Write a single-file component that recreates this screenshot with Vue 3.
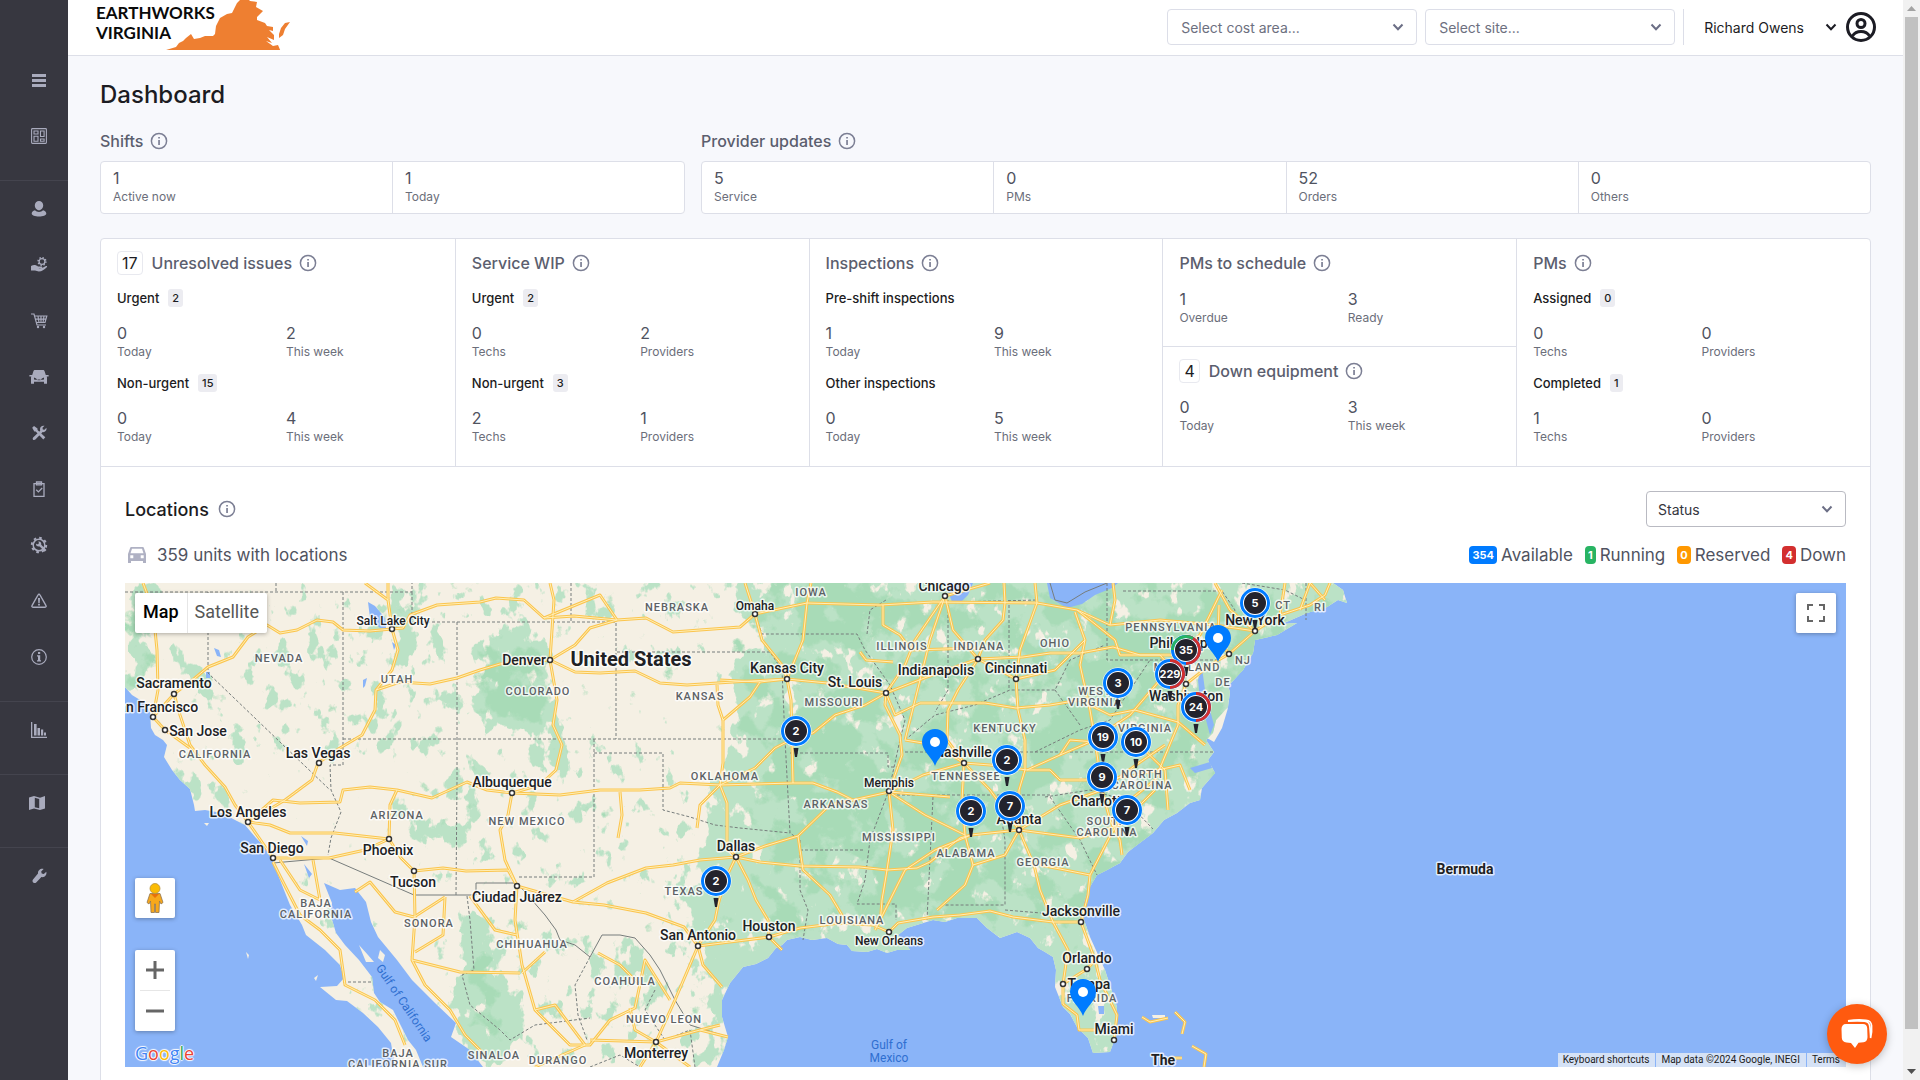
<script setup>
const navGroups = [
  ['menu', 'board'],
  ['user', 'service', 'cart', 'car', 'tools', 'clipboard', 'gear', 'warning', 'info'],
  ['chart'],
  ['map'],
  ['wrench'],
]
const navNames = {
  menu: 'Menu', board: 'Dashboard', user: 'People', service: 'Service', cart: 'Orders', car: 'Equipment',
  tools: 'Repairs', clipboard: 'Inspections', gear: 'Maintenance', warning: 'Issues', info: 'Information',
  chart: 'Reports', map: 'Map', wrench: 'Settings',
}

const summaries = [
  { title: 'Shifts', size: 'narrow', cells: [['1', 'Active now'], ['1', 'Today']] },
  { title: 'Provider updates', size: 'wide', cells: [['5', 'Service'], ['0', 'PMs'], ['52', 'Orders'], ['0', 'Others']] },
]

const columns = [
  [{ title: 'Unresolved issues', total: '17', groups: [
    { name: 'Urgent', count: '2', stats: [['0', 'Today'], ['2', 'This week']] },
    { name: 'Non-urgent', count: '15', stats: [['0', 'Today'], ['4', 'This week']] },
  ] }],
  [{ title: 'Service WIP', groups: [
    { name: 'Urgent', count: '2', stats: [['0', 'Techs'], ['2', 'Providers']] },
    { name: 'Non-urgent', count: '3', stats: [['2', 'Techs'], ['1', 'Providers']] },
  ] }],
  [{ title: 'Inspections', groups: [
    { name: 'Pre-shift inspections', stats: [['1', 'Today'], ['9', 'This week']] },
    { name: 'Other inspections', stats: [['0', 'Today'], ['5', 'This week']] },
  ] }],
  [
    { title: 'PMs to schedule', groups: [{ stats: [['1', 'Overdue'], ['3', 'Ready']] }] },
    { title: 'Down equipment', total: '4', groups: [{ stats: [['0', 'Today'], ['3', 'This week']] }] },
  ],
  [{ title: 'PMs', groups: [
    { name: 'Assigned', count: '0', stats: [['0', 'Techs'], ['0', 'Providers']] },
    { name: 'Completed', count: '1', stats: [['1', 'Techs'], ['0', 'Providers']] },
  ] }],
]

const legend = [
  ['354', 'Available', 'blue'], ['1', 'Running', 'green'], ['0', 'Reserved', 'amber'], ['4', 'Down', 'red'],
]

const land = 'M125 583V687L132 695 145 703 150 712 151 728 155 735 163 740 167 745 164 757 172 770 180 780 190 789 194 805 195 811 205 810 222 813 235 820 245 825 256 838 268 850 273 862 282 885 290 905 302 925 306 935 325 950 340 965 344 978 337 986 320 987 336 1000 347 1001 363 1013 378 1027 391 1043 395 1067H423L416 1050 408 1040 399 1022 393 1010 380 1002 374 993 372 977 359 960 345 945 336 933 330 913 332 903 324 883 340 890 355 888 366 902 371 922 378 937 397 960 412 980 435 1003 456 1023 451 1037 470 1050 483 1067H717L724 1050 728 1037 722 1017 722 1000 730 983 743 967 756 964 768 958 776 948 782 945 787 940 800 937 812 940 827 938 838 944 847 945 852 951 867 952 877 949 887 953 897 950 910 950 905 942 898 935 907 928 920 924 933 920 945 922 957 918 977 918 987 928 1000 938 1017 932 1030 938 1038 948 1045 952 1053 957 1056 970 1055 987 1063 1007 1070 1014 1077 1027 1088 1038 1093 1053 1110 1052 1117 1033 1117 1007 1105 970 1090 937 1083 917 1084 902 1088 890 1097 875 1107 870 1120 863 1128 852 1137 845 1153 833 1164 820 1177 813 1190 803 1200 800 1202 788 1215 773 1208 760 1214 752 1206 740 1213 733 1216 720 1228 707 1230 692 1226 680 1217 670 1230 684 1243 670 1253 653 1255 640 1277 635 1297 623 1282 624 1307 613 1327 607 1338 600 1347 603 1343 590 1333 583Z'

const forests = [
  { o: 0.9, d: 'M700 570L735 605 760 640 728 665 735 720 725 760 705 800 700 860 690 930 712 965 728 1040 735 1067H1400V570Z' },
  { o: 0.5, d: 'M670 650L740 640 740 800 700 860 672 880 665 940 690 1010 690 1067 740 1060 740 640Z' },
  { o: 0.9, d: 'M125 583H160L165 640 205 665 220 720 250 760 240 770 200 700 175 660 150 600 145 690H125Z' },
  { o: 0.55, d: 'M160 740L180 755 225 790 260 830 300 860 290 870 240 825 195 812 170 770Z' },
  { o: 0.85, d: 'M520 615L550 640 550 690 570 720 560 770 530 775 530 730 490 730 455 720 470 700 480 680 470 640Z' },
  { o: 0.8, d: 'M395 583H418L412 630 440 640 400 660 385 725 370 728 390 690 395 650Z' },
  { o: 0.7, d: 'M395 790L420 812 450 825 470 840 468 860 440 835 410 825 385 805Z' },
  { o: 0.95, d: 'M463 905L490 930 495 970 530 1010 500 1067H480L455 1020 450 990 462 965Z' },
  { o: 0.6, d: 'M600 960L640 950 660 985 650 1010 620 1000Z' },
  { o: 0.6, d: 'M455 770H480V830L460 820Z' },
  { o: 0.38, d: 'M230 590H460V760H240Z' },
  { o: 0.33, d: 'M455 583H700V670H560V620H455Z' },
  { o: 0.3, d: 'M450 740H690V900H640L540 890 410 880 400 800Z' },
  { o: 0.38, d: 'M276 870L330 940 360 1000 410 1067 440 1067 380 980 320 880Z' },
  { o: 0.34, d: 'M420 900L640 940 720 1067H420L460 1020 400 950Z' },
]
const highlands = [
  { o: 0.55, d: 'M740 583H1340V800L1130 870 1080 920 760 940 735 700Z' },
  { o: 0.85, d: 'M1110 620L1180 600 1160 680 1100 730 1040 790 1000 800 1040 740 1080 700Z' },
  { o: 0.8, d: 'M780 700H880L870 800 790 850Z' },
  { o: 0.75, d: 'M800 583H890V640H800Z' },
  { o: 0.65, d: 'M870 790H1000V910H870Z' },
  { o: 0.7, d: 'M125 590H150V690H125ZM470 640H550V730H480ZM465 920L500 960 505 1060 480 1040ZM205 660L245 750 230 750Z' },
]

const roads = [
  'M143 583L153 610 157 650 158 690 153 717 165 730 190 748', 'M174 694L180 715 190 745 205 765 225 787 235 805 248 822 273 858',
  'M153 717L174 694 195 678 208 667 233 657 248 637 267 625 280 633 297 630 317 620 333 622 343 630 370 631 403 628 410 615 437 605 480 602 496 598 524 600 544 618 574 616 617 620 646 618 673 632 740 627 755 614 807 603 880 605 933 602 1037 603 1077 610 1110 625 1160 620 1215 625 1255 631',
  'M365 583L388 600 392 629 398 650 392 670 376 690 375 710 362 735 340 748 318 763 312 780 285 800 260 815',
  'M388 583V600', 'M544 618L600 595 617 620M550 660L575 645 590 628 617 620',
  'M376 690L400 682 430 684 457 678 480 670 500 664 550 660 575 672 600 673 635 671 660 683 687 685 733 682 787 679 827 683 886 693 927 677 978 659 1023 657 1050 653 1080 653 1113 647 1140 655 1175 655',
  'M550 583L554 600 550 660 557 700 553 725 562 745 556 770 540 785 512 793 508 815 500 830 505 860 517 886',
  'M248 822L273 800 300 803 340 802 343 790 370 787 397 790 432 798 467 782 487 790 512 793 560 795 600 790 640 790 670 788 680 783 720 785 793 783 813 783 837 792 853 800 889 792 923 775 964 763 990 765 1027 770 1060 755 1090 742 1130 715 1160 680 1175 655 1200 635 1222 590',
  'M397 790L390 805 389 839', 'M248 822L270 825 290 833 335 833 389 839 401 858 414 871 443 868 466 871 508 870 517 886 573 902 604 905 646 913 684 927 698 946 769 937 800 928 840 923 873 925 889 932 898 923 933 917 960 915 990 911 1013 917 1053 922 1081 922',
  'M273 858L329 858 365 850 389 839', 'M573 902L607 883 646 868 673 865 700 860 736 857 760 862 800 866 860 867 887 870 917 868 930 862 960 838 971 835 1019 830 1080 838 1120 825 1155 790',
  'M811 583L807 603 803 640 787 679 760 682 750 697 723 720 723 763 720 785 727 803 727 847 736 857 725 880 718 905 715 920 698 946 675 1000 656 1042',
  'M717 685L718 705 723 720M760 682L720 680M720 785L700 805 697 828', 'M736 857L748 880 756 900 768 920 769 937 782 950',
  'M745 583L755 614 762 640 782 665 787 679 791 700 793 783', 'M720 785L755 768 775 748 800 735 813 733 835 715 865 705 886 693',
  'M736 857L765 846 798 836 830 805 853 800', 'M798 836L803 870 830 895 845 920', 'M698 946L703 965 722 987',
  'M945 596L915 640 905 665 886 693 885 705 900 735 902 755 889 792 893 830 887 870 882 900 880 925', 'M886 693L895 715 920 703',
  'M945 596L930 640 915 700 905 740', 'M945 596L953 630 978 659 958 690 948 710 947 740 964 763 962 800 965 835 973 865 965 885 937 910',
  'M945 596L990 583M883 605L883 625 900 635 911 650 978 648', 'M860 652L866 660 893 662M978 659L1016 679 1055 670 1085 640',
  'M1035 583L1037 603 1020 650 1016 679 1018 710 1025 740 1025 770 1019 790 1019 830 1034 865 1040 890 1053 922 1068 950 1063 984 1063 1004 1077 1015 1079 1030 1095 1030',
  'M1004 583L1005 603 1003 620 985 640 978 659', 'M1114 1040L1117 1015 1100 980 1095 960 1081 922 1088 895 1090 875 1108 840 1130 800 1155 780 1178 725 1178 705 1186 684 1210 665 1229 654 1255 631 1280 615 1310 605 1325 595 1330 583',
  'M1019 830L1060 805 1102 790 1136 765 1165 745', 'M1075 612L1085 640 1080 665 1090 710 1095 740 1102 790 1110 820 1120 840 1122 855',
  'M905 740L935 745 964 763 990 790 1019 830 1005 855 973 865', 'M920 703L985 703 1016 708 1050 705 1080 700 1110 715 1135 710 1178 722 1205 745',
  'M889 792L925 815 965 835M889 792L950 797', 'M875 930L905 870 935 850 971 835', 'M1063 984L1087 969 1100 955', 'M1040 865L1090 875',
  'M1027 770L1050 770 1060 780 1102 780 1136 775 1180 765 1190 790', 'M1136 742L1165 770 1168 810', 'M1060 755L1070 740 1095 742',
  'M1077 610L1090 620 1115 640 1120 655 1160 655 1186 684', 'M1110 625L1115 600 1113 583M1255 631L1230 610 1215 583M1280 615L1285 583M1300 610L1310 583M1229 654L1218 640 1219 605M1310 583L1325 600',
  'M273 862L282 880 300 915 320 930 340 950 345 985 375 1000 395 1020 405 1045', 'M280 860L300 890 320 900 313 860',
  'M355 892L370 882 395 912 414 917 445 897', 'M414 871L415 917 412 960 425 985 450 1010 465 1035 485 1055', 'M412 960L460 972 520 973M445 897L443 935 415 952',
  'M470 896L495 930 517 935', 'M517 886L515 920 522 965 535 1010 570 1045 590 1045 610 1020 635 1008 645 960 670 1000', 'M522 973L545 952M535 1010L555 1005 585 1045 535 1067',
  'M598 953L620 965 640 985M656 1042L635 1030 630 1008M656 1042L700 1030 728 1037M656 1042L590 1040M656 1042L640 1067M656 1042L690 1067M700 1030L720 1025M620 792L622 815 618 838',
  'M1142 1017L1150 1022 1168 1018M1175 1012L1185 1022 1182 1034M1192 1046L1206 1054 1204 1067M1172 1058L1182 1058',
]

const borders = 'M125 592H412V583M276 583V592M343 592V765H330L331 790 341 812 331 838 328 855M412 592V622H616V739M457 622V780L456 895M343 739H785M571 583V622M208 592V673L330 790M594 739V877H517M594 753H663V810L690 817 715 825 740 828 790 833M617 652H770L782 670 785 739 790 833 800 840V890L808 910 803 940M800 850H865M900 740L889 790 870 840 865 880 857 904H896V920M790 753H888V767H900M887 795H1050M905 752H1213M933 797L927 920M998 797L1005 840V905H945M1005 910L1053 914M755 614L762 634H857L865 650 890 685 905 720 900 740M867 634L870 610 886 600M948 600V690L935 712M953 602L1037 600M1009 600V690M905 740L935 715 975 705 1010 690 1055 690 1070 660 1105 645M1107 583V660H1218M1123 591H1222L1235 610 1220 650M1045 797L1090 790 1125 800 1153 829M1050 797L1080 840 1097 875M1035 752L1080 730 1110 720 1130 690 1150 660M1055 690L1080 725M343 982H372M467 896L470 920 474 970 462 975 470 1005 500 1030 510 1040 535 1025 590 1018M590 957L575 985 578 1015 587 1040M655 990L645 1010 665 1040 690 1030 695 1067M590 1067L620 1055 640 1067M656 1042M1242 583L1285 590 1305 600M1306 583V620'
const nations = 'M273 863L329 858 414 895H476V883H517L545 915 556 930 560 940 575 945 590 957 602 935 620 935 635 938 650 955 660 970 675 1000 690 1025 728 1037M1050 583L1055 600 1067 603 1085 592 1107 583'
const lakes = 'M945 583L952 602 960 603 968 595 973 583ZM1047 583L1050 598 1067 608 1082 604 1095 595 1112 588 1118 583ZM368 602L375 606 385 618 386 628 380 628 370 618ZM214 648L219 650 221 657 217 656ZM206 672H210V678H206ZM363 680L367 678 365 686 363 688ZM301 836L308 841 307 846ZM304 864L312 874 309 878ZM392 642L396 645 394 650ZM1098 1006L1104 1006 1104 1014 1099 1014ZM1202 668L1205 690 1210 710 1214 725 1210 735 1206 720 1200 700 1198 680ZM1190 768L1210 762 1212 768 1195 773Z'
const isles = 'M359 945L368 955 374 962 366 962ZM380 950L385 955 383 962 378 958ZM314 978L318 975 316 981ZM204 823L209 823 207 826ZM246 952L249 955 248 959ZM1207 738L1215 712 1228 708 1222 728 1214 742ZM1152 1015H1165V1018H1153Z'

const cities = [
  ['Sacramento', 174, 683, 174, 694], ['San Francisco', 154, 707, 153, 717], ['San Jose', 198, 731, 165, 730],
  ['Las Vegas', 318, 753, 319, 763], ['Los Angeles', 248, 812, 248, 822], ['San Diego', 272, 848, 273, 858],
  ['Phoenix', 388, 850, 389, 839], ['Tucson', 413, 882, 414, 871], ['Denver', 524, 660, 550, 660],
  ['Albuquerque', 512, 782, 512, 793], ['Ciudad Juárez', 517, 897, 517, 886], ['Monterrey', 656, 1053, 656, 1042],
  ['Kansas City', 787, 668, 787, 679], ['St. Louis', 855, 682, 886, 693], ['Indianapolis', 936, 670, 978, 659],
  ['Cincinnati', 1016, 668, 1016, 679], ['Chicago', 944, 586, 945, 596], ['Nashville', 963, 752, 964, 763],
  ['Dallas', 736, 846, 736, 857], ['Houston', 769, 926, 769, 937], ['San Antonio', 698, 935, 698, 946],
  ['Atlanta', 1019, 819, 1019, 830], ['Jacksonville', 1081, 911, 1081, 922], ['Orlando', 1087, 958, 1087, 969],
  ['Tampa', 1089, 984, 1063, 984], ['Miami', 1114, 1029, 1114, 1040], ['Philadelphia', 1188, 643, 1229, 654],
  ['New York', 1255, 620, 1255, 631], ['Washington', 1186, 696, 1186, 684], ['Charlotte', 1100, 801, 1102, 790],
]
const towns = [
  ['Salt Lake City', 393, 621, 392, 629], ['Omaha', 755, 606, 755, 614], ['Memphis', 889, 783, 889, 791], ['New Orleans', 889, 941, 889, 932],
]
const states = [
  ['CALIFORNIA', 215, 754], ['NEVADA', 279, 658], ['UTAH', 397, 679], ['ARIZONA', 397, 815], ['COLORADO', 538, 691],
  ['NEW MEXICO', 527, 821], ['BAJA', 316, 903], ['CALIFORNIA', 316, 914], ['SONORA', 429, 923], ['CHIHUAHUA', 532, 944],
  ['COAHUILA', 625, 981], ['NUEVO LEON', 664, 1019], ['BAJA', 398, 1053], ['CALIFORNIA SUR', 398, 1064], ['SINALOA', 494, 1055],
  ['DURANGO', 558, 1060], ['NEBRASKA', 677, 607], ['IOWA', 811, 592], ['KANSAS', 700, 696], ['MISSOURI', 834, 702],
  ['ILLINOIS', 902, 646], ['INDIANA', 979, 646], ['OHIO', 1055, 643], ['KENTUCKY', 1005, 728], ['TENNESSEE', 966, 776],
  ['ARKANSAS', 836, 804], ['OKLAHOMA', 725, 776], ['MISSISSIPPI', 899, 837], ['ALABAMA', 966, 853], ['GEORGIA', 1043, 862],
  ['TEXAS', 684, 891], ['LOUISIANA', 852, 920], ['FLORIDA', 1092, 998], ['PENNSYLVANIA', 1171, 627], ['CT', 1283, 605],
  ['RI', 1320, 607], ['NJ', 1243, 660], ['DE', 1223, 682], ['MARYLAND', 1187, 667], ['WEST', 1095, 691], ['VIRGINIA', 1095, 702],
  ['VIRGINIA', 1145, 728], ['NORTH', 1142, 774], ['CAROLINA', 1142, 785], ['SOUTH', 1107, 821], ['CAROLINA', 1107, 832],
]
const pins = [[935, 742], [1218, 638], [1083, 992]]
const clusters = [
  ['5', 1255, 603], ['35', 1186, 650, 'mixed'], ['229', 1170, 674, 'half'], ['3', 1118, 683], ['24', 1196, 707, 'half'],
  ['19', 1103, 737], ['10', 1136, 742], ['9', 1102, 777], ['7', 1127, 810], ['2', 1007, 760], ['2', 971, 811],
  ['7', 1010, 806], ['2', 796, 731], ['2', 716, 881],
]
</script>

<template>
  <div class="shell">
    <svg class="defs" aria-hidden="true">
      <symbol id="i-info" viewBox="0 0 18 18"><circle cx="9" cy="9" r="7.6" fill="none" stroke="currentColor" stroke-width="1.5" /><path d="M8.2 5h1.7v1.6H8.2zM8.2 8h1.7v5H8.2z" fill="currentColor" /></symbol>
      <symbol id="i-chevron" viewBox="0 0 12 12"><path d="M1.5 3.5 6 8.3l4.5-4.8" fill="none" stroke="currentColor" stroke-width="2" /></symbol>
      <symbol id="n-menu" viewBox="0 0 20 20"><path d="M3 4h14v3H3zM3 9h14v3H3zM3 14h14v3H3z" fill="currentColor" /></symbol>
      <symbol id="n-board" viewBox="0 0 20 20"><g fill="none" stroke="currentColor" stroke-width="1.1"><rect x="2.6" y="2.6" width="14.8" height="14.8" rx=".8" /><path d="M5 5h4v3H5zM5 10.200h4v5H5zM11.500 5h3.600v5.500h-3.600zM11.500 13h3.600v2.300h-3.600z" /></g></symbol>
      <symbol id="n-user" viewBox="0 0 20 20"><path d="M10 2a4.200 4.200 0 0 1 4.200 4.300c0 2.600-1.800 5-4.200 5s-4.200-2.400-4.200-5A4.200 4.200 0 0 1 10 2zM6 11.300c2 2.300 6 2.300 8 0 2 .5 3.300 1.900 3.300 3.300 0 2-3.300 3-7.300 3s-7.300-1-7.300-3c0-1.400 1.300-2.800 3.300-3.300z" fill="currentColor" /></symbol>
      <symbol id="n-service" viewBox="0 0 20 20"><path d="M2 11c3-1.500 5-1 7 .6h3.500c1 .1 1 1.400 0 1.500H9.500c3 .7 5-.6 7.500-2 1-.4 1.500.5.800 1.200-2.800 2.500-4.800 4.200-8 4.200L6 15.500H2z" fill="currentColor" /><circle cx="13" cy="6.500" r="2.900" fill="none" stroke="currentColor" stroke-width="1.300" /><circle cx="13" cy="6.500" r="3.900" fill="none" stroke="currentColor" stroke-width="1.500" stroke-dasharray="1.400 1.660" /></symbol>
      <symbol id="n-cart" viewBox="0 0 20 20"><g fill="none" stroke="currentColor" stroke-width="1.200"><path d="M2 3h3l3 11h9M5.500 5h12.300l-1.800 6.500H7.200M6.200 8.200h10.700M9 5l1 6.500M12 5v6.500M15 5l-1 6.500" /></g><circle cx="9" cy="16" r="1.200" fill="currentColor" /><circle cx="15" cy="16" r="1.200" fill="currentColor" /></symbol>
      <symbol id="n-car" viewBox="0 0 20 20"><path d="M6 3h8c.8 0 1.300.5 1.600 1.200L16.800 8H19.600v1.500h-1.900l.3 1v6.300h-3v-2H5v2H2v-6.300l.3-1H.4V8h2.800l1.200-3.800C4.700 3.500 5.200 3 6 3zM5 10.500v2l3 .4-.8-1.400zM15 10.500v2l-3 .4.8-1.400zM8.500 13.300h3v-.8h-3z" fill="currentColor" fill-rule="evenodd" /></symbol>
      <symbol id="n-tools" viewBox="0 0 20 20"><path d="M3.200 4.800 5 3l3.500 2.600v1.500l7.800 7.200-2 2.100-7.600-8H5.300zM11 6.200c0-2.700 2.200-4 4.500-3.400l-2 2 .3 1.600 1.700.3 1.900-1.900c.6 2.600-1.200 4.600-3.700 4.300l-7.300 7.500c-1.800 1.400-3.600-.5-2.300-2.200l7.100-6.600z" fill="currentColor" /></symbol>
      <symbol id="n-clipboard" viewBox="0 0 20 20"><g fill="none" stroke="currentColor" stroke-width="1.300"><path d="M5 4.600h10v12.700H5z" /><path d="M7.500 3h5v2.800h-5zM7.200 10.700l2.200 2.200 3.800-3.900" /></g></symbol>
      <symbol id="n-gear" viewBox="0 0 20 20"><circle cx="10" cy="10" r="5.800" fill="none" stroke="currentColor" stroke-width="1.500" /><circle cx="10" cy="10" r="7.200" fill="none" stroke="currentColor" stroke-width="2" stroke-dasharray="2.600 3.050" /><path d="M7 8.500c.8 1.200 2 1 2.600.2.600-.9.100-1.600-.4-2.200 2.200-.4 3.500 1.200 3 3.200l5.300 5.300-1.800 1.700-5-5.200C8.500 12 6.500 10.500 7 8.500z" fill="currentColor" /></symbol>
      <symbol id="n-warning" viewBox="0 0 20 20"><path d="M10 3.300c.5 0 .8.300 1 .7l6 10.700c.4.800 0 1.500-.9 1.500H3.900c-.9 0-1.300-.7-.9-1.500L9 4c.2-.4.500-.7 1-.7z" fill="none" stroke="currentColor" stroke-width="1.400" /><path d="M9 7h2l-.3 5H9.300zM9.100 12.800h1.800v1.700H9.100z" fill="currentColor" /></symbol>
      <symbol id="n-info" viewBox="0 0 20 20"><circle cx="10" cy="10" r="7.300" fill="none" stroke="currentColor" stroke-width="1.200" /><path d="M9 5h2.200v2H9zM8 8.300h3.200v5H12v1.300H8v-1.300h1V9.600H8z" fill="currentColor" /></symbol>
      <symbol id="n-chart" viewBox="0 0 20 20"><path d="M2 2h1.300v14.700H18V18H2zM5 4h2.600v11.500H5zM8.500 8h2.500v7.500H8.500zM12 9.500h2.200v6H12zM15 12.500h2v3h-2z" fill="currentColor" /></symbol>
      <symbol id="n-map" viewBox="0 0 20 20"><path d="M0 4.500 5 3l6 1.700L16 3v12.500L11 17l-6-1.600L0 17z" fill="currentColor" /><path d="M5.800 4.800 10.200 6v9.300L5.800 14.200z" fill="#373740" /></symbol>
      <symbol id="n-wrench" viewBox="0 0 20 20"><path d="M9 7.500C8.700 4.600 11.500 2.200 14.600 3l-2.400 2.500.5 2.100 2.100.5 2.500-2.400c.8 3.500-1.900 6.100-4.900 5.300l-5.200 5.500c-1.900 1.700-4.900-.8-3.200-3z" fill="currentColor" /></symbol>
    </svg>

    <nav class="sidebar" aria-label="Main">
      <div v-for="(group, g) in navGroups" :key="g" class="nav-group">
        <a v-for="item in group" :key="item" href="#" class="nav-item" :aria-label="navNames[item]">
          <svg width="20" height="20"><use :href="'#n-' + item" /></svg>
        </a>
      </div>
    </nav>

    <div class="page">
      <header class="topbar">
        <a href="#" class="logo">
          <span class="logo-text">EARTHWORKS<br />VIRGINIA</span>
          <svg class="logo-art" viewBox="166 0 124 50" width="124" height="50" aria-hidden="true">
            <path fill="#ee7f31" d="M166 50l10-3 3-4 4-2 3-3 5-4 3 5 6-1 5-2h8l2-2 1-8 4-8 7-4 5-1 3-6 2-4 4-4h7l2 2 7 1-1 5 7 4-6 6v3l8 3 2 3 6 1v4l-4-1 5 5v5l-7-3 5 6-6-2 7 5 5-1 3 7zM290 22l-5 1-4 5-2 6v4l4-3 2-6z" />
          </svg>
        </a>
        <div class="top-tools">
          <span class="select-wrap">
            <select class="top-select" aria-label="Cost area"><option>Select cost area...</option></select>
            <svg class="select-arrow" width="12" height="12"><use href="#i-chevron" /></svg>
          </span>
          <span class="select-wrap">
            <select class="top-select" aria-label="Site"><option>Select site...</option></select>
            <svg class="select-arrow" width="12" height="12"><use href="#i-chevron" /></svg>
          </span>
          <button type="button" class="account">
            <span>Richard Owens</span>
            <svg class="account-arrow" width="12" height="12"><use href="#i-chevron" /></svg>
            <svg width="32" height="32" viewBox="0 0 32 32" fill="none" stroke="#1c1c24" stroke-width="3"><circle cx="16" cy="16" r="13.500" /><circle cx="16" cy="12.500" r="4" /><path d="M7.500 25c2-3.300 5-4.500 8.500-4.500s6.500 1.200 8.500 4.500" /></svg>
          </button>
        </div>
      </header>

      <main class="content">
        <h1>Dashboard</h1>
        <div class="summaries">
          <section v-for="s in summaries" :key="s.title" :class="s.size">
            <h2 class="title">{{ s.title }} <svg class="info" width="18" height="18"><use href="#i-info" /></svg></h2>
            <div class="cells">
              <div v-for="c in s.cells" :key="c[1]" class="cell stat"><b>{{ c[0] }}</b><span>{{ c[1] }}</span></div>
            </div>
          </section>
        </div>

        <div class="card">
          <div class="columns">
            <div v-for="(col, i) in columns" :key="i" class="column">
              <section v-for="p in col" :key="p.title" class="panel">
                <h2 class="title"><span v-if="p.total" class="total">{{ p.total }}</span>{{ p.title }} <svg class="info" width="18" height="18"><use href="#i-info" /></svg></h2>
                <div v-for="(g, j) in p.groups" :key="j">
                  <h3 v-if="g.name">{{ g.name }} <span v-if="g.count" class="count">{{ g.count }}</span></h3>
                  <div class="stats">
                    <div v-for="s in g.stats" :key="s[1]" class="stat"><b>{{ s[0] }}</b><span>{{ s[1] }}</span></div>
                  </div>
                </div>
              </section>
            </div>
          </div>

          <section class="locations">
            <div class="row">
              <h2 class="loc-title">Locations <svg class="info" width="18" height="18"><use href="#i-info" /></svg></h2>
              <span class="select-wrap">
                <select class="status-select" aria-label="Colour units by"><option>Status</option></select>
                <svg class="select-arrow" width="12" height="12"><use href="#i-chevron" /></svg>
              </span>
            </div>
            <div class="row info-row">
              <p class="units">
                <svg width="20" height="18" viewBox="0 0 20 18"><path d="M4.500 1h11c.8 0 1.300.5 1.500 1.200L19 8v9h-3v-2H4v2H1V8l2-5.800C3.200 1.500 3.700 1 4.500 1zM5 2.800 3.500 7.200h13L15 2.800zM3.300 9.300v2.900h3V9.300zM13.700 9.300v2.900h3V9.300z" fill="#afb1c3" fill-rule="evenodd" /></svg>
                359 units with locations
              </p>
              <ul class="legend">
                <li v-for="l in legend" :key="l[1]"><span class="tag" :class="l[2]">{{ l[0] }}</span>{{ l[1] }}</li>
              </ul>
            </div>

            <div class="map">
              <svg class="map-art" viewBox="125 583 1721 484" preserveAspectRatio="xMidYMid slice" role="img" aria-label="Map of unit locations">
                <defs>
                  <clipPath id="land-clip"><path :d="land" /></clipPath>
                  <filter id="woods" filterUnits="userSpaceOnUse" x="125" y="583" width="1230" height="484" color-interpolation-filters="sRGB">
                    <feTurbulence type="fractalNoise" baseFrequency=".065 .045" numOctaves="4" seed="8" />
                    <feColorMatrix values="0 0 0 0 0 0 0 0 0 0 0 0 0 0 0 1 0 0 0 0" result="noise" />
                    <feGaussianBlur in="SourceAlpha" stdDeviation="6" result="area" />
                    <feComposite in="noise" in2="area" operator="arithmetic" k1="0" k2="1" k3=".55" k4="-.35" />
                    <feComponentTransfer result="mask"><feFuncA type="linear" slope="14" intercept="-6.3" /></feComponentTransfer>
                    <feFlood flood-color="#bbe2c6" /><feComposite in2="mask" operator="in" />
                  </filter>
                  <filter id="hills" filterUnits="userSpaceOnUse" x="125" y="583" width="1230" height="484" color-interpolation-filters="sRGB">
                    <feTurbulence type="fractalNoise" baseFrequency=".035 .035" numOctaves="5" seed="21" />
                    <feColorMatrix values="0 0 0 0 0 0 0 0 0 0 0 0 0 0 0 1 0 0 0 0" result="noise" />
                    <feGaussianBlur in="SourceAlpha" stdDeviation="9" result="area" />
                    <feComposite in="noise" in2="area" operator="arithmetic" k1="0" k2="1" k3=".5" k4="-.4" />
                    <feComponentTransfer result="mask"><feFuncA type="linear" slope="10" intercept="-3.6" /></feComponentTransfer>
                    <feFlood flood-color="#a8dbb7" /><feComposite in2="mask" operator="in" />
                  </filter>
                </defs>
                <rect x="125" y="583" width="1721" height="484" fill="#8ab4f8" />
                <g fill="#f5f0e4"><path :d="land" /><path :d="isles" /></g>
                <g clip-path="url(#land-clip)">
                  <g filter="url(#woods)"><path v-for="(f, k) in forests" :key="k" :d="f.d" :fill-opacity="f.o" /></g>
                  <g filter="url(#hills)"><path v-for="(f, k) in highlands" :key="k" :d="f.d" :fill-opacity="f.o" /></g>
                </g>
                <path :d="lakes" fill="#8ab4f8" />
                <path :d="borders" class="border" />
                <path :d="nations" class="nation" />
                <g class="road-edge"><path v-for="(r, k) in roads" :key="k" :d="r" /></g>
                <g class="road-core"><path v-for="(r, k) in roads" :key="k" :d="r" /></g>
                <g class="dots">
                  <circle v-for="c in cities" :key="c[0]" :cx="c[3]" :cy="c[4]" r="2.500" />
                  <circle v-for="c in towns" :key="c[0]" :cx="c[3]" :cy="c[4]" r="2.500" />
                </g>
                <g class="label state"><text v-for="(s, k) in states" :key="k" :x="s[1]" :y="s[2] + 4">{{ s[0] }}</text></g>
                <g class="label town"><text v-for="c in towns" :key="c[0]" :x="c[1]" :y="c[2] + 4">{{ c[0] }}</text></g>
                <g class="label city"><text v-for="c in cities" :key="c[0]" :x="c[1]" :y="c[2] + 5">{{ c[0] }}</text></g>
                <g class="label place"><text x="1465" y="874">Bermuda</text><text x="1163" y="1065">The</text></g>
                <g class="label country"><text x="631" y="666">United States</text></g>
                <g class="sea">
                  <text x="889" y="1049">Gulf of</text><text x="889" y="1062">Mexico</text>
                  <text x="404" y="1007" transform="rotate(56 404 1003)">Gulf of California</text>
                </g>
                <g v-for="(p, k) in pins" :key="k" :transform="`translate(${p[0]} ${p[1]})`">
                  <path d="M0 24C-3 15-13 9-13 0a13 13 0 0 1 26 0C13 9 3 15 0 24z" fill="#007bff" /><circle r="5" fill="#fff" />
                </g>
                <g v-for="(c, k) in clusters" :key="'c' + k" :transform="`translate(${c[1]} ${c[2]})`">
                  <path d="M-2.500 17h5L1 26h-2z" fill="#23232d" />
                  <circle r="15.500" fill="#fff" />
                  <circle r="13.500" class="ring" />
                  <path v-if="c[3]" d="M0-13.500a13.500 13.500 0 0 1 0 27" class="ring red-ring" />
                  <path v-if="c[3] === 'mixed'" d="M-13.500 0A13.500 13.500 0 0 1 7-11.500" class="ring green-ring" />
                  <circle r="11" fill="#23232d" />
                  <text y="4" class="cluster-text">{{ c[0] }}</text>
                </g>
              </svg>

              <div class="map-type">
                <button type="button" class="active">Map</button><button type="button">Satellite</button>
              </div>
              <button type="button" class="map-btn fullscreen" aria-label="Toggle fullscreen">
                <svg width="18" height="18" viewBox="0 0 18 18" fill="none" stroke="#666" stroke-width="2"><path d="M1 6V1h5M12 1h5v5M17 12v5h-5M6 17H1v-5" /></svg>
              </button>
              <button type="button" class="map-btn pegman" aria-label="Street View">
                <svg width="18" height="30" viewBox="0 0 18 30"><path d="M4 10.500h10l3 9-2 1.500-1.500-3-.5 11.500H9.500V21h-1v8.500H5L4.500 18 3 21l-2-1.500z" fill="#f7a81b" stroke="#8f7550" stroke-width=".8" /><circle cx="9" cy="5.500" r="5" fill="#fbbc04" stroke="#b9923e" stroke-width=".8" /><path d="M5 11h8l-4 4z" fill="#e8710a" /></svg>
              </button>
              <div class="zoom">
                <button type="button" aria-label="Zoom in"><svg width="18" height="18" viewBox="0 0 18 18"><path d="M7.500 0h3v7.500H18v3h-7.500V18h-3v-7.500H0v-3h7.500z" fill="#666" /></svg></button>
                <button type="button" aria-label="Zoom out"><svg width="18" height="18" viewBox="0 0 18 18"><path d="M0 7.500h18v3H0z" fill="#666" /></svg></button>
              </div>
              <a href="#" class="google" aria-label="Google"><i class="g1">G</i><i class="g2">o</i><i class="g3">o</i><i class="g1">g</i><i class="g4">l</i><i class="g2">e</i></a>
              <div class="credits"><button type="button">Keyboard shortcuts</button><span>Map data ©2024 Google, INEGI</span><a href="#">Terms</a></div>
            </div>
          </section>
        </div>
      </main>
    </div>

    <div class="scrollbar" aria-hidden="true">
      <svg width="9" height="5" viewBox="0 0 9 5"><path d="M0 5 4.500 0 9 5z" fill="#a3a3a3" /></svg>
      <div class="thumb"></div>
      <svg width="9" height="5" viewBox="0 0 9 5"><path d="M0 0h9L4.500 5z" fill="#505050" /></svg>
    </div>

    <button type="button" class="chat" aria-label="Open chat">
      <svg width="34" height="32" viewBox="0 0 34 32"><path d="M6 6h17c2.500 0 4 1.500 4.200 4l.3 9c0 3-1.500 5-4 5.300l-5 .5L15 30l-4-5-4.500-.5C3.500 24 2 22.500 1.800 20l-.3-9c0-3 1.500-5 4.500-5z" fill="#fff" /><path d="M8 2.800c6-1 12-1.200 18-.6 3.500.3 5.300 2 5.600 5.400.3 4 .2 8-1 12.500M8 3.200c6-.4 12-.5 16.500 0 3.500.3 5 2 5.300 5.400.4 4 .8 8 .8 11.500" fill="none" stroke="#fff" stroke-width="1.600" /></svg>
    </button>
  </div>
</template>

<style>
body { margin: 0; }
</style>

<style scoped>
* { box-sizing: border-box; }
.shell { display: flex; height: 100vh; overflow: hidden; position: relative; background: #f7f8fc; font-family: Inter, "Liberation Sans", sans-serif; color: #50535f; }
.defs { position: absolute; width: 0; height: 0; }
h1, h2, h3, p, ul { margin: 0; padding: 0; font-weight: 400; }
button, select { font-family: inherit; margin: 0; }
button { border: 0; padding: 0; background: none; cursor: pointer; }
a { text-decoration: none; color: inherit; }

.sidebar { flex: 0 0 68px; background: #373740; padding-top: 52px; }
.nav-group { padding-bottom: 16px; border-bottom: 1px solid #44444e; }
.nav-group:last-child { border-bottom: 0; }
.nav-item { display: flex; align-items: center; justify-content: center; height: 56px; padding-left: 10px; color: #a9abbd; }

.page { flex: 1; min-width: 0; }
.topbar { display: flex; justify-content: space-between; height: 56px; padding: 0 26px 0 28px; background: #fff; border-bottom: 1px solid #dddfe8; }
.logo { position: relative; width: 194px; color: #0a0a0a; }
.logo-text { display: block; padding-top: 3px; font: 700 17px/20px Lato, sans-serif; }
.logo-art { position: absolute; left: 70px; top: 0; }
.top-tools { display: flex; align-items: center; gap: 8px; height: 54px; }
.select-wrap { position: relative; display: block; }
.select-wrap select { appearance: none; height: 36px; border: 1px solid #dcdee8; border-radius: 4px; background: #fff; font-size: 14px; padding: 0 32px 0 13px; }
.select-wrap .top-select { width: 250px; color: #6d7080; }
.select-wrap .status-select { width: 200px; border-color: #b9bac2; color: #35363e; padding-left: 11px; }
.select-arrow { position: absolute; right: 13px; top: 12px; color: #6b6e85; pointer-events: none; }
.account { display: flex; align-items: center; height: 36px; padding-left: 20px; border-left: 1px solid #dcdee8; font-size: 14px; color: #1c1c24; }
.account-arrow { margin: 0 8px 0 21px; }

.content { padding: 24px 32px 0; }
h1 { font-size: 24px; font-weight: 500; line-height: 30px; color: #1c1c22; margin-bottom: 20px; }
.title { display: flex; align-items: center; height: 26px; font-size: 16px; line-height: 26px; gap: 7px; font-weight: 500; color: #5b5e6e; }
.info { color: #7c7f94; flex: none; }
.summaries { display: flex; gap: 16px; }
.narrow { flex: 1; }
.wide { flex: 2; }
.summaries .title { height: 22px; line-height: 22px; margin-bottom: 9px; }
.cells { display: flex; background: #fff; border: 1px solid #dddfe8; border-radius: 4px; }
.cell { flex: 1; padding: 7px 12px; }
.cell + .cell { border-left: 1px solid #dddfe8; }
.stat b { display: block; font-size: 16px; line-height: 19px; font-weight: 400; }
.stat span { display: block; font-size: 12px; line-height: 18px; color: #6b6e7a; }

.card { margin-top: 24px; background: #fff; border: 1px solid #dddfe8; border-radius: 4px 4px 0 0; height: 900px; }
.columns { display: grid; grid-template-columns: repeat(5, 1fr); height: 228px; border-bottom: 1px solid #dddfe8; }
.column + .column { border-left: 1px solid #dddfe8; }
.panel { padding: 11px 0 0 16px; }
.panel + .panel { border-top: 1px solid #dddfe8; }
.total { border: 1px solid #e8e9ef; border-radius: 4px; padding: 0 4px; line-height: 22px; color: #1c1c22; margin-right: 2px; font-weight: 400; }
h3 { display: flex; align-items: center; gap: 9px; height: 18px; margin-top: 13px; font-size: 13px; font-weight: 500; color: #1c1c22; }
.count { background: #ececf1; border-radius: 3px; padding: 0 4px; font-size: 11px; line-height: 18px; }
.stats { display: grid; grid-template-columns: 1fr 1fr; padding-top: 17px; }
.column:nth-child(4) .stats { padding: 14px 0 19px; }

.locations { padding: 24px; }
.row { display: flex; align-items: center; justify-content: space-between; }
.loc-title { display: flex; align-items: center; gap: 9px; font-size: 18px; font-weight: 500; color: #1c1c22; }
.info-row { height: 56px; }
.units { display: flex; align-items: center; gap: 10px; padding-left: 2px; font-size: 17px; }
.legend { display: flex; gap: 12px; list-style: none; font-size: 17px; }
.legend li { display: flex; align-items: center; gap: 4px; }
.tag { color: #fff; font-size: 11px; font-weight: 700; line-height: 18px; border-radius: 4px; padding: 0 3px; }
.blue { background: #007bff; }
.green { background: #28b463; }
.amber { background: #ff9800; }
.red { background: #d32f2f; }

.map { position: relative; height: 484px; overflow: hidden; font-family: Roboto, sans-serif; }
.map-art { display: block; width: 100%; height: 100%; }
.border { fill: none; stroke: #777d7c; stroke-width: 1; stroke-dasharray: 3 2; }
.nation { fill: none; stroke: #777d7c; stroke-width: 1; }
.road-edge, .road-core { fill: none; stroke-linejoin: round; }
.road-edge { stroke: #fbc54e; stroke-width: 3; }
.road-core { stroke: #ffefb8; stroke-width: 1; }
.dots { fill: #fff; stroke: #333; stroke-width: 1.5; }
.label { text-anchor: middle; paint-order: stroke; stroke: #fff; stroke-opacity: .75; stroke-width: 3px; stroke-linejoin: round; fill: #202124; font-weight: 500; }
.city { font-size: 14px; }
.town { font-size: 12px; }
.place { font-size: 14px; font-weight: 700; }
.country { font-size: 20px; font-weight: 700; }
.state { font-size: 11px; letter-spacing: 1px; fill: #5c6165; }
.sea { font-size: 12px; text-anchor: middle; fill: #2f6fd0; }
.ring { fill: none; stroke: #007bff; stroke-width: 3; }
.red-ring { stroke: #d32f2f; }
.green-ring { stroke: #28b463; }
.cluster-text { fill: #fff; font: 700 11px Inter, sans-serif; text-anchor: middle; }

.map-type { position: absolute; left: 10px; top: 10px; display: flex; background: #fff; border-radius: 2px; box-shadow: 0 1px 4px rgba(0, 0, 0, .3); }
.map-type button { height: 40px; padding: 0 8px 3px; font-size: 18px; color: #565656; }
.map-type .active { color: #000; font-weight: 500; box-shadow: 1px 0 0 #e6e6e6; }
.map-btn, .zoom { position: absolute; width: 40px; background: #fff; border-radius: 2px; box-shadow: 0 1px 4px rgba(0, 0, 0, .3); }
.map-btn { height: 40px; display: flex; align-items: center; justify-content: center; }
.fullscreen { right: 10px; top: 10px; }
.pegman { left: 10px; bottom: 149px; }
.zoom { left: 10px; bottom: 36px; padding: 0 5px; }
.zoom button { display: flex; align-items: center; justify-content: center; width: 30px; height: 40px; }
.zoom button + button { border-top: 1px solid #e6e6e6; height: 41px; }
.google { position: absolute; left: 10px; bottom: 2px; font: 400 18px/24px "Open Sans", sans-serif; text-shadow: 0 0 1px #fff, 1px 0 1px #fff, -1px 0 1px #fff, 0 1px 1px #fff, 0 -1px 1px #fff; }
.google i { font-style: normal; }
.g1 { color: #4285f4; }
.g2 { color: #ea4335; }
.g3 { color: #fbbc04; }
.g4 { color: #34a853; }
.credits { position: absolute; right: 0; bottom: 0; display: flex; gap: 1px; }
.credits > * { background: rgba(245, 245, 245, .7); padding: 0 6px 0 5px; font-size: 10px; line-height: 14px; color: #1c1c1c; }

.scrollbar { flex: 0 0 17px; display: flex; flex-direction: column; align-items: center; justify-content: space-between; padding: 6px 0; background: #f1f1f1; }
.thumb { width: 13px; flex: 1; margin: 6px 0 40px; background: #c1c1c1; }
.chat { position: absolute; right: 33px; bottom: 16px; width: 60px; height: 60px; border-radius: 50%; background: #ff5a0f; display: flex; align-items: center; justify-content: center; box-shadow: 0 2px 8px rgba(0, 0, 0, .25); }
</style>
